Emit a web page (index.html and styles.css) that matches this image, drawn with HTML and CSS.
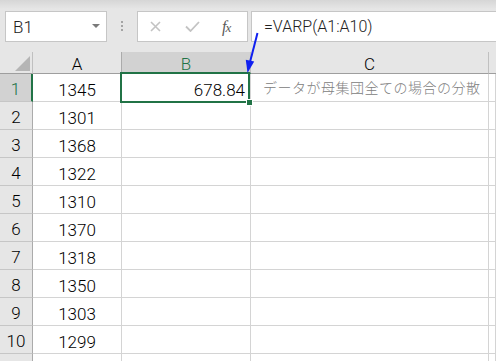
FILE: index.html
```html
<!DOCTYPE html>
<html>
    <head>
        <meta charset="utf-8">
        <link rel="stylesheet" href="styles.css">
    </head>
    <body>
        <div class="app">
            <div class="toolbar">
                <div class="namebox">B1<span class="namebox__caret"></span></div>
                <div class="grip"><i></i><i></i><i></i></div>
                <div class="fbuttons">
                    <svg class="fbuttons__cancel" width="11" height="11" viewBox="0 0 11 11"><path d="M1 1L10 10M10 1L1 10" stroke="#c3c3c3" stroke-width="1.6" fill="none"/></svg>
                    <svg class="fbuttons__enter" width="15" height="11" viewBox="0 0 15 11"><path d="M1 5.5L5.5 10L14 1" stroke="#c3c3c3" stroke-width="1.8" fill="none"/></svg>
                    <span class="fbuttons__fx">f<span>x</span></span>
                </div>
                <div class="formula">=VARP(A1:A10)</div>
            </div>

            <div class="sheet">
                <div class="corner"><span class="corner__tri"></span></div>
                <div class="colhead">A</div>
                <div class="colhead colhead_active">B</div>
                <div class="colhead">C</div>
                <div class="colhead colhead_last"></div>

                <div class="rowhead rowhead_active">1</div>
                <div class="cell cell_num">1345</div>
                <div class="cell cell_right">678.84</div>
                <div class="cell cell_note">データが母集団全ての場合の分散</div>
                <div class="cell"></div>

                <div class="rowhead">2</div><div class="cell cell_num">1301</div><div class="cell"></div><div class="cell"></div><div class="cell"></div>
                <div class="rowhead">3</div><div class="cell cell_num">1368</div><div class="cell"></div><div class="cell"></div><div class="cell"></div>
                <div class="rowhead">4</div><div class="cell cell_num">1322</div><div class="cell"></div><div class="cell"></div><div class="cell"></div>
                <div class="rowhead">5</div><div class="cell cell_num">1310</div><div class="cell"></div><div class="cell"></div><div class="cell"></div>
                <div class="rowhead">6</div><div class="cell cell_num">1370</div><div class="cell"></div><div class="cell"></div><div class="cell"></div>
                <div class="rowhead">7</div><div class="cell cell_num">1318</div><div class="cell"></div><div class="cell"></div><div class="cell"></div>
                <div class="rowhead">8</div><div class="cell cell_num">1350</div><div class="cell"></div><div class="cell"></div><div class="cell"></div>
                <div class="rowhead">9</div><div class="cell cell_num">1303</div><div class="cell"></div><div class="cell"></div><div class="cell"></div>
                <div class="rowhead">10</div><div class="cell cell_num">1299</div><div class="cell"></div><div class="cell"></div><div class="cell"></div>
                <div class="rowhead">11</div><div class="cell"></div><div class="cell"></div><div class="cell"></div><div class="cell"></div>

                <div class="selection"><span class="selection__handle"></span></div>
            </div>

            <!-- pointer to the selected cell -->
            <svg class="pointer" width="496" height="361" viewBox="0 0 496 361">
                <line x1="257.5" y1="33" x2="249.5" y2="64" stroke="#1020f0" stroke-width="2"/>
                <polygon points="247.5,73 254.2,61.6 245.8,59.8" fill="#1020f0"/>
            </svg>
        </div>
    </body>
</html>
```

FILE: styles.css
```css
body, html {
    margin: 0;
    font-family: Roboto, "Liberation Sans", "Noto Sans CJK JP", sans-serif;
    font-weight: 300;
    color: #000;
    background-color: #fff;
}

* {
    box-sizing: border-box;
}

.app {
    position: relative;
    width: 496px;
    height: 361px;
    overflow: hidden;
}

/* formula bar */

.toolbar {
    display: flex;
    height: 52px;
    padding-top: 11px;
    background: linear-gradient(#d6d6d6, #e6e6e6 9px);
}

.namebox {
    position: relative;
    margin-left: 5px;
    width: 102px;
    height: 31px;
    border: 1px solid #c6c6c6;
    background-color: #fff;
    padding-left: 7px;
    font-size: 17px;
    line-height: 30px;
    color: #222;
}

.namebox__caret {
    position: absolute;
    right: 6px;
    top: 12px;
    border-left: 4px solid transparent;
    border-right: 4px solid transparent;
    border-top: 4px solid #7a7a7a;
}

.grip {
    width: 30px;
    display: flex;
    flex-direction: column;
    align-items: center;
    gap: 2px;
    padding-top: 10px;
}

.grip i {
    display: block;
    width: 2px;
    height: 2px;
    background-color: #a4a4a4;
}

.fbuttons {
    display: flex;
    align-items: center;
    width: 111px;
    height: 31px;
    border: 1px solid #c6c6c6;
    background-color: #fff;
    padding-left: 12px;
}

.fbuttons__enter {
    margin-left: 24px;
}

.fbuttons__fx {
    margin-left: 22px;
    font-family: "Liberation Serif", serif;
    font-weight: 400;
    font-style: italic;
    font-size: 16px;
    color: #5a5a5a;
    letter-spacing: -1px;
}

.fbuttons__fx span {
    font-size: 13px;
}

.formula {
    flex: 1;
    margin-left: 3px;
    margin-right: -2px;
    height: 31px;
    border: 1px solid #c6c6c6;
    background-color: #fff;
    padding-left: 12px;
    font-size: 16px;
    line-height: 29px;
    color: #222;
}

/* sheet */

.sheet {
    position: relative;
    display: grid;
    grid-template-columns: 33px 89px 129px 238px 1fr;
    grid-template-rows: 22px repeat(11, 28px);
}

.corner {
    position: relative;
    background-color: #e6e6e6;
    border-right: 1px solid #c0c0c0;
    border-bottom: 1px solid #9e9e9e;
}

.corner__tri {
    position: absolute;
    right: 2px;
    bottom: 2px;
    border-left: 15px solid transparent;
    border-bottom: 15px solid #b5b5b5;
}

.colhead {
    background-color: #e6e6e6;
    border-right: 1px solid #c0c0c0;
    border-bottom: 1px solid #9e9e9e;
    text-align: center;
    font-size: 17px;
    line-height: 21px;
    padding-top: 2px;
    overflow: hidden;
}

.colhead_active {
    background-color: #d2d2d2;
    border-left: 1px solid #ababab;
    border-bottom: 2px solid #217346;
    color: #217346;
    margin-left: -1px;
}

.colhead_last {
    border-right: none;
}

.rowhead {
    background-color: #e6e6e6;
    border-right: 1px solid #ababab;
    border-bottom: 1px solid #c6c6c6;
    text-align: center;
    font-size: 17px;
    line-height: 27px;
    padding-top: 2px;
    overflow: hidden;
}

.rowhead_active {
    background-color: #d2d2d2;
    border-right: 2px solid #217346;
    color: #217346;
}

.cell {
    border-right: 1px solid #d4d4d4;
    border-bottom: 1px solid #d4d4d4;
    font-size: 17px;
    line-height: 27px;
    padding-top: 3px;
    overflow: hidden;
    white-space: nowrap;
}

.cell_num {
    text-align: center;
}

.cell_right {
    text-align: right;
    padding-right: 5px;
}

.cell_note {
    font-family: "Noto Sans CJK JP", sans-serif;
    font-size: 14px;
    letter-spacing: 0.5px;
    color: #808080;
    padding-left: 12px;
    padding-top: 0;
}

.selection {
    position: absolute;
    left: 120px;
    top: 20px;
    width: 130px;
    height: 31px;
    border: 2px solid #217346;
}

.selection__handle {
    position: absolute;
    right: -5px;
    bottom: -5px;
    width: 7px;
    height: 7px;
    background-color: #217346;
    border: 1px solid #fff;
}

.pointer {
    position: absolute;
    left: 0;
    top: 0;
}
```
